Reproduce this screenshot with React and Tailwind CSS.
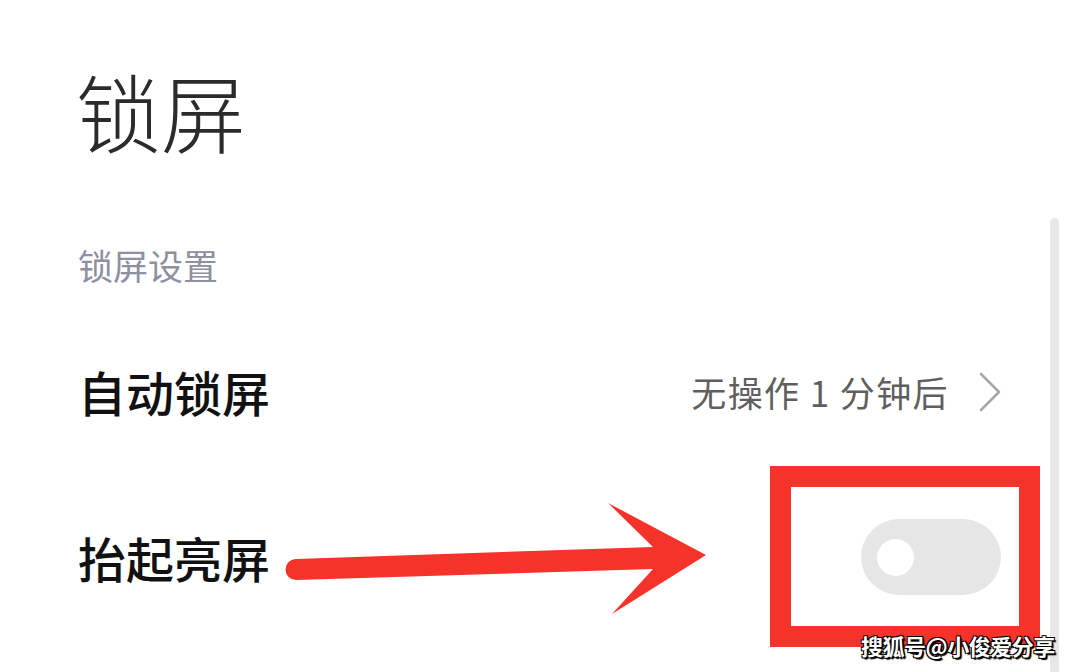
import React from "react";

const CJK = { fontFamily: '"Noto Sans CJK SC", "Noto Sans", sans-serif' };

export default function App() {
  return (
    <div
      className="relative w-[1080px] h-[672px] overflow-hidden bg-white"
      style={CJK}
    >
      {/* Page content */}
      <div className="flex flex-col pl-[76px] pr-[79px]">
        <h1 className="mt-[67px] text-[85px] leading-none font-light text-[#2b2b2b]">
          锁屏
        </h1>
        <div className="mt-[95px] pl-[2px] text-[35px] leading-none text-[#8c90a0]">
          锁屏设置
        </div>
        <div className="mt-[26px] flex h-[166px] items-center justify-between pl-[2px]">
          <span className="text-[48px] leading-none font-medium text-[#111]">
            自动锁屏
          </span>
          <div className="flex items-center gap-[30px]">
            <span className="text-[35px] leading-none tracking-[1.4px] text-[#5f5f5f]">
              无操作 1 分钟后
            </span>
            <svg width="22" height="40" viewBox="0 0 22 40" className="mt-[2px]">
              <path
                d="M2 2 L20 20 L2 38"
                fill="none"
                stroke="#a8a8a8"
                strokeWidth="2.6"
                strokeLinecap="round"
                strokeLinejoin="round"
              />
            </svg>
          </div>
        </div>
        <div className="flex h-[166px] items-center justify-between pl-[2px]">
          <span className="text-[48px] leading-none font-medium text-[#111]">
            抬起亮屏
          </span>
          <div className="flex h-[76px] w-[140px] items-center rounded-full bg-[#e6e6e6] px-[16px]">
            <div className="h-[37px] w-[37px] rounded-full bg-white" />
          </div>
        </div>
      </div>

      {/* Overlay scrollbar */}
      <div className="absolute left-[1050px] top-[218px] h-[470px] w-[9px] rounded-t-full bg-[#e7e7e7]" />

      {/* Red annotation box */}
      <div className="absolute left-[770px] top-[466px] h-[181px] w-[270px] border-[21px] border-[#f5332b]" />

      {/* Red arrow annotation */}
      <svg
        className="absolute left-0 top-0"
        width="1080"
        height="672"
        viewBox="0 0 1080 672"
      >
        <path
          d="M296 559 L653 547 L608 503 L706 555 L612 614 L653 569 L296 580 A10.5 10.5 0 0 1 296 559 Z"
          fill="#f5332b"
        />
      </svg>

      {/* Watermark */}
      <div className="absolute left-[861px] top-[634px] text-[22px] leading-none font-bold text-white tracking-[-0.5px] [text-shadow:1px_1px_0_#000,-1px_-1px_0_#000,1px_-1px_0_#000,-1px_1px_0_#000,2px_2px_1px_#000]">
        搜狐号@小俊爱分享
      </div>
    </div>
  );
}
